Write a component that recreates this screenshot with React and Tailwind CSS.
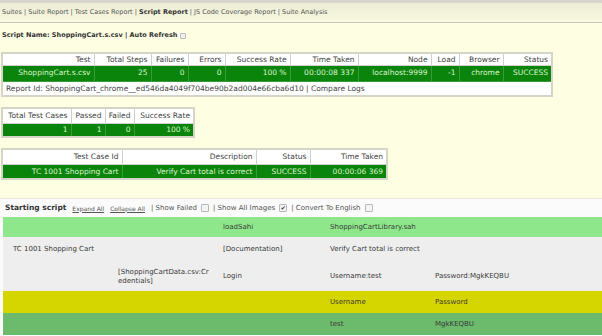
import React from "react";

const font = "font-['DejaVu_Sans',Verdana,sans-serif]";

const Box = ({ checked }) => (
  <span
    className={`inline-flex items-center justify-center w-[8px] h-[8px] border border-[#b8b8b8] bg-[#f4f4f4] rounded-[1px] align-middle text-[6px] leading-none text-[#333]`}
  >
    {checked ? "✔" : ""}
  </span>
);

const head1 = [
  ["Test", 92],
  ["Total Steps", 57],
  ["Failures", 37],
  ["Errors", 37],
  ["Success Rate", 65],
  ["Time Taken", 68],
  ["Node", 73],
  ["Load", 28],
  ["Browser", 44],
  ["Status", 49],
];
const row1 = ["ShoppingCart.s.csv", "25", "0", "0", "100 %", "00:00:08 337", "localhost:9999", "-1", "chrome", "SUCCESS"];

const head2 = [
  ["Total Test Cases", 69],
  ["Passed", 34],
  ["Failed", 29],
  ["Success Rate", 60],
];
const row2 = ["1", "1", "0", "100 %"];

const head3 = [
  ["Test Case Id", 120],
  ["Description", 134],
  ["Status", 54],
  ["Time Taken", 77],
];
const row3 = ["TC 1001 Shopping Cart", "Verify Cart total is correct", "SUCCESS", "00:00:06 369"];

const ReportTable = ({ head, row, extra, hh, rh }) => (
  <table className="border-collapse border-2 border-[#d4d4c8] text-[7.5px]">
    <thead>
      <tr className={`${hh} bg-white`}>
        {head.map(([h, w]) => (
          <th
            key={h}
            style={{ width: w }}
            className="border border-[#d0d0d0] text-right font-normal text-[#444] px-[3px] py-0 leading-none"
          >
            {h}
          </th>
        ))}
      </tr>
    </thead>
    <tbody>
      <tr className={`${rh} bg-[#0a840a]`}>
        {row.map((c, i) => (
          <td
            key={i}
            className="border border-[#3a9a3a] text-right text-[#dff3cf] px-[3px] py-0 leading-none whitespace-nowrap"
          >
            {c}
          </td>
        ))}
      </tr>
      {extra && (
        <tr className="h-[15px] bg-white">
          <td colSpan={head.length} className="border border-[#d0d0d0] text-left text-[#444] px-[3px] py-0">
            {extra}
          </td>
        </tr>
      )}
    </tbody>
  </table>
);

const Row = ({ bg, cells, h }) => (
  <div className={`flex ${bg} ${h} items-center text-[7px] text-[#3a3a3a]`}>
    <div className="w-[112px] pl-[10px]">{cells[0]}</div>
    <div className="w-[105px] pl-[3px] pr-[8px] break-all leading-[9px]">{cells[1]}</div>
    <div className="w-[107px] pl-[3px]">{cells[2]}</div>
    <div className="w-[105px] pl-[3px]">{cells[3]}</div>
    <div className="flex-1 pl-[3px]">{cells[4]}</div>
  </div>
);

export default function App() {
  return (
    <div className={`w-[602px] h-[336px] overflow-hidden bg-[#fefee2] ${font}`}>
      <div className="h-[3px] bg-[#d6d6ce]" />
      <div className="h-[20px] flex items-center px-[2px] bg-gradient-to-b from-[#eeeed8] to-[#f8f8de] border-b border-[#c8c8bc] text-[6.5px] text-[#555] whitespace-pre">
        {"Suites | Suite Report | Test Cases Report | "}
        <b className="text-[#333]">Script Report</b>
        {" | JS Code Coverage Report | Suite Analysis"}
      </div>
      <div className="px-[2px] pt-[3px] h-[22px] flex items-center gap-[3px] text-[6.5px] font-bold text-[#333]">
        Script Name: ShoppingCart.s.csv | Auto Refresh
        <span className="inline-block w-[6px] h-[6px] border border-[#bbb] bg-[#f2f2f2] rounded-[1px]" />
      </div>
      <div className="pl-[1px] mt-[7px]">
        <ReportTable
          head={head1}
          row={row1}
          hh="h-[12px]"
          rh="h-[16px]"
          extra="Report Id: ShoppingCart_chrome__ed546da4049f704be90b2ad004e66cba6d10 | Compare Logs"
        />
      </div>
      <div className="pl-[1px] mt-[10px]">
        <ReportTable head={head2} row={row2} hh="h-[15px]" rh="h-[14px]" />
      </div>
      <div className="pl-[1px] mt-[10px]">
        <ReportTable head={head3} row={row3} hh="h-[15px]" rh="h-[15px]" />
      </div>
      <div className="mt-[18px] border-t border-[#e6e6dc] bg-[#fbfbfb] h-[140px]">
        <div className="h-[18px] flex items-center pl-[5px] gap-[4px] text-[7px] text-[#555]">
          <b className="text-[#333] text-[7.5px] mr-[2px]">Starting script</b>
          <span className="underline text-[6px]">Expand All</span>
          <span className="underline text-[6px] ml-[2px]">Collapse All</span>
          <span className="ml-[2px]">| Show Failed</span>
          <Box />
          <span>| Show All Images</span>
          <Box checked />
          <span>| Convert To English</span>
          <Box />
        </div>
        <div className="ml-[3px]">
          <Row bg="bg-[#8ee78a]" h="h-[20px]" cells={["", "", "loadSahi", "ShoppingCartLibrary.sah", ""]} />
          <div className="bg-[#eeeeee]">
            <Row bg="" h="h-[25px]" cells={["TC 1001 Shopping Cart", "", "[Documentation]", "Verify Cart total is correct", ""]} />
            <Row
              bg=""
              h="h-[29px]"
              cells={["", "[ShoppingCartData.csv:Credentials]", "Login", "Username:test", "Password:MgkKEQBU"]}
            />
          </div>
          <Row bg="bg-[#d5d500]" h="h-[22px]" cells={["", "", "", "Username", "Password"]} />
          <Row bg="bg-[#6cbb6c]" h="h-[22px]" cells={["", "", "", "test", "MgkKEQBU"]} />
        </div>
      </div>
    </div>
  );
}
